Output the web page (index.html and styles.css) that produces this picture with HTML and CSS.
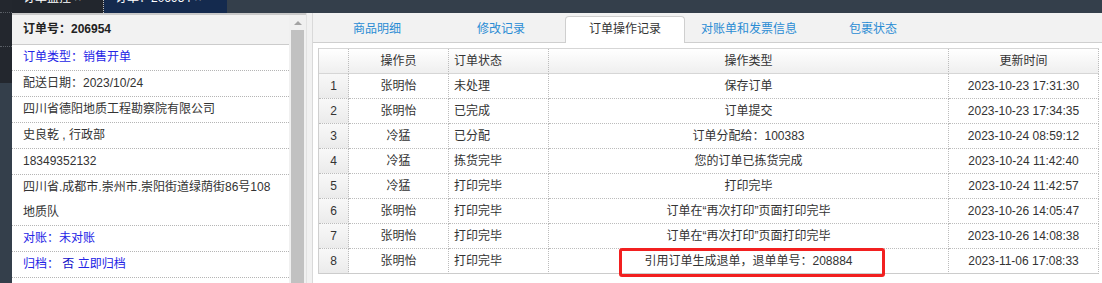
FILE: index.html
```html
<!DOCTYPE html>
<html lang="zh-CN">
<head>
<meta charset="utf-8">
<title>订单操作记录</title>
<link rel="stylesheet" href="styles.css">
</head>
<body>
<div class="page">
  <div class="topbar">
    <div class="corner"></div>
    <div class="toptab dark"><span class="toptext">订单监控 ×</span></div>
    <div class="toptab navy"><span class="toptext">订单：206954 ×</span></div>
    <div class="topfill"></div>
  </div>
  <div class="main">
    <div class="leftnav">
      <div class="navitem"></div>
      <div class="navitem second"></div>
    </div>
    <div class="leftcol">
      <div class="info">
        <div class="info-head">订单号：206954</div>
        <div class="info-row blue">订单类型：销售开单</div>
        <div class="info-row">配送日期：2023/10/24</div>
        <div class="info-row">四川省德阳地质工程勘察院有限公司</div>
        <div class="info-row">史良乾 , 行政部</div>
        <div class="info-row">18349352132</div>
        <div class="info-row">四川省.成都市.崇州市.崇阳街道绿荫街86号108<br>地质队</div>
        <div class="info-row blue">对账：未对账</div>
        <div class="info-row blue">归档： <span class="strong">否</span> 立即归档</div>
      </div>
      <div class="scrollbar">
        <div class="scroll-up"><span class="arrow"></span></div>
        <div class="scroll-thumb"></div>
      </div>
    </div>
    <div class="gutter"></div>
    <div class="content">
      <div class="tabs">
        <div class="tab">商品明细</div>
        <div class="tab">修改记录</div>
        <div class="tab active">订单操作记录</div>
        <div class="tab">对账单和发票信息</div>
        <div class="tab">包裹状态</div>
      </div>
      <div class="pane">
        <div class="grid">
          <div class="row head">
            <div class="cell num"></div>
            <div class="cell c">操作员</div>
            <div class="cell l">订单状态</div>
            <div class="cell c">操作类型</div>
            <div class="cell c">更新时间</div>
          </div>
          <div class="row">
            <div class="cell num">1</div>
            <div class="cell c">张明怡</div>
            <div class="cell l">未处理</div>
            <div class="cell c">保存订单</div>
            <div class="cell c">2023-10-23 17:31:30</div>
          </div>
          <div class="row">
            <div class="cell num">2</div>
            <div class="cell c">张明怡</div>
            <div class="cell l">已完成</div>
            <div class="cell c">订单提交</div>
            <div class="cell c">2023-10-23 17:34:35</div>
          </div>
          <div class="row">
            <div class="cell num">3</div>
            <div class="cell c">冷猛</div>
            <div class="cell l">已分配</div>
            <div class="cell c">订单分配给：100383</div>
            <div class="cell c">2023-10-24 08:59:12</div>
          </div>
          <div class="row">
            <div class="cell num">4</div>
            <div class="cell c">冷猛</div>
            <div class="cell l">拣货完毕</div>
            <div class="cell c">您的订单已拣货完成</div>
            <div class="cell c">2023-10-24 11:42:40</div>
          </div>
          <div class="row">
            <div class="cell num">5</div>
            <div class="cell c">冷猛</div>
            <div class="cell l">打印完毕</div>
            <div class="cell c">打印完毕</div>
            <div class="cell c">2023-10-24 11:42:57</div>
          </div>
          <div class="row">
            <div class="cell num">6</div>
            <div class="cell c">张明怡</div>
            <div class="cell l">打印完毕</div>
            <div class="cell c">订单在“再次打印”页面打印完毕</div>
            <div class="cell c">2023-10-26 14:05:47</div>
          </div>
          <div class="row">
            <div class="cell num">7</div>
            <div class="cell c">张明怡</div>
            <div class="cell l">打印完毕</div>
            <div class="cell c">订单在“再次打印”页面打印完毕</div>
            <div class="cell c">2023-10-26 14:08:38</div>
          </div>
          <div class="row last">
            <div class="cell num">8</div>
            <div class="cell c">张明怡</div>
            <div class="cell l">打印完毕</div>
            <div class="cell c marked">引用订单生成退单，退单单号：208884<span class="highlight"></span></div>
            <div class="cell c">2023-11-06 17:08:33</div>
          </div>
        </div>
      </div>
    </div>
  </div>
</div>
</body>
</html>
```

FILE: styles.css
```css
* { box-sizing: border-box; }
html, body {
  margin: 0;
  padding: 0;
}
body {
  width: 1102px;
  height: 283px;
  overflow: hidden;
  background: #343f4b;
  font-family: "Liberation Sans", "Noto Sans CJK SC", sans-serif;
  font-size: 12px;
  color: #333;
}
.page {
  display: flex;
  flex-direction: column;
  height: 283px;
}
.topbar {
  display: flex;
  height: 13px;
  flex-shrink: 0;
}
.corner {
  width: 12px;
  background: #23272e;
  border-bottom: 1px dotted #5a5f66;
}
.toptab {
  height: 13px;
  overflow: hidden;
  color: #fff;
  padding-left: 11px;
}
.toptab.dark {
  width: 92px;
  background: #22262d;
  border-right: 1px dotted #b8bcc2;
}
.toptab.navy {
  width: 123px;
  background: #142a4e;
}
.toptext {
  display: block;
  line-height: 12px;
  margin-top: -8px;
  white-space: nowrap;
}
.topfill {
  flex: 1;
  background: #343f4b;
}
.main {
  display: flex;
  height: 270px;
}
.leftnav {
  width: 12px;
  background: #343f4b;
  display: flex;
  flex-direction: column;
}
.navitem {
  height: 34px;
  background: #23272e;
  border-bottom: 1px dotted #5a5f66;
}
.navitem.second {
  height: 36px;
  border-bottom: none;
}
.leftcol {
  display: flex;
  width: 294px;
  border-top: 2px solid #c9c9c9;
}
.info {
  width: 277px;
  background: #fff;
}
.info-head {
  height: 30px;
  background: #f2f2f2;
  border-bottom: 1px solid #cccccc;
  font-weight: bold;
  color: #222;
  line-height: 29px;
  padding-left: 11px;
}
.info-row {
  line-height: 25px;
  padding-left: 11px;
  border-bottom: 1px dotted #b5b5b5;
  white-space: nowrap;
}
.info-row.blue {
  color: #2424e6;
}
.info-row .strong {
  color: #1010c8;
}
.scrollbar {
  width: 17px;
  background: #f0f0f0;
  display: flex;
  flex-direction: column;
  align-items: center;
}
.scroll-up {
  height: 15px;
  width: 17px;
  display: flex;
  align-items: center;
  justify-content: center;
}
.arrow {
  width: 0;
  height: 0;
  border-left: 4px solid transparent;
  border-right: 4px solid transparent;
  border-bottom: 4px solid #a3a3a3;
}
.scroll-thumb {
  width: 13px;
  flex: 1;
  background: #c1c1c1;
}
.gutter {
  width: 6px;
  background: #f1f1f1;
  border-left: 1px solid #e2e2e2;
}
.content {
  width: 790px;
  border-left: 1px solid #d9d9d9;
  background: #fff;
  display: flex;
  flex-direction: column;
}
.tabs {
  height: 30px;
  background: #f2f2f2;
  border-bottom: 1px solid #cfcfcf;
  display: flex;
  align-items: flex-start;
  padding-left: 4px;
  gap: 4px;
}
.tab {
  width: 120px;
  height: 27px;
  margin-top: 3px;
  line-height: 25px;
  text-align: center;
  color: #2a8cd4;
  border: 1px solid transparent;
  border-bottom: none;
  white-space: nowrap;
}
.tab.active {
  background: #fff;
  color: #333;
  border-color: #cfcfcf;
  border-radius: 4px 4px 0 0;
  height: 28px;
  margin-bottom: -1px;
}
.pane {
  padding: 5px 0 0 5px;
  background: #fff;
  flex: 1;
}
.grid {
  width: 781px;
  border-left: 1px solid #cfcfcf;
  display: flex;
  flex-direction: column;
}
.row {
  display: grid;
  grid-template-columns: 30px 100px 100px 400px 150px;
  height: 25px;
}
.row.head {
  height: 26px;
  border-top: 1px solid #d6d6d6;
  background: linear-gradient(#ffffff, #eeeeee);
}
.cell {
  line-height: 24px;
  border-right: 1px dotted #bcbcbc;
  border-bottom: 1px dotted #bcbcbc;
  white-space: nowrap;
  overflow: visible;
}
.row.head .cell {
  border-bottom: 1px solid #d6d6d6;
}
.row.last .cell {
  border-bottom: 1px solid #cccccc;
}
.cell.c { text-align: center; }
.cell.l { text-align: left; padding-left: 5px; }
.cell.num {
  text-align: center;
  background: linear-gradient(#f8f8f8, #ebebeb);
}
.row.head .cell.num {
  background: transparent;
}
.marked {
  position: relative;
}
.highlight {
  position: absolute;
  left: 70px;
  top: -1px;
  width: 266px;
  height: 29px;
  border: 3px solid #f22020;
  border-radius: 3px;
}
```
